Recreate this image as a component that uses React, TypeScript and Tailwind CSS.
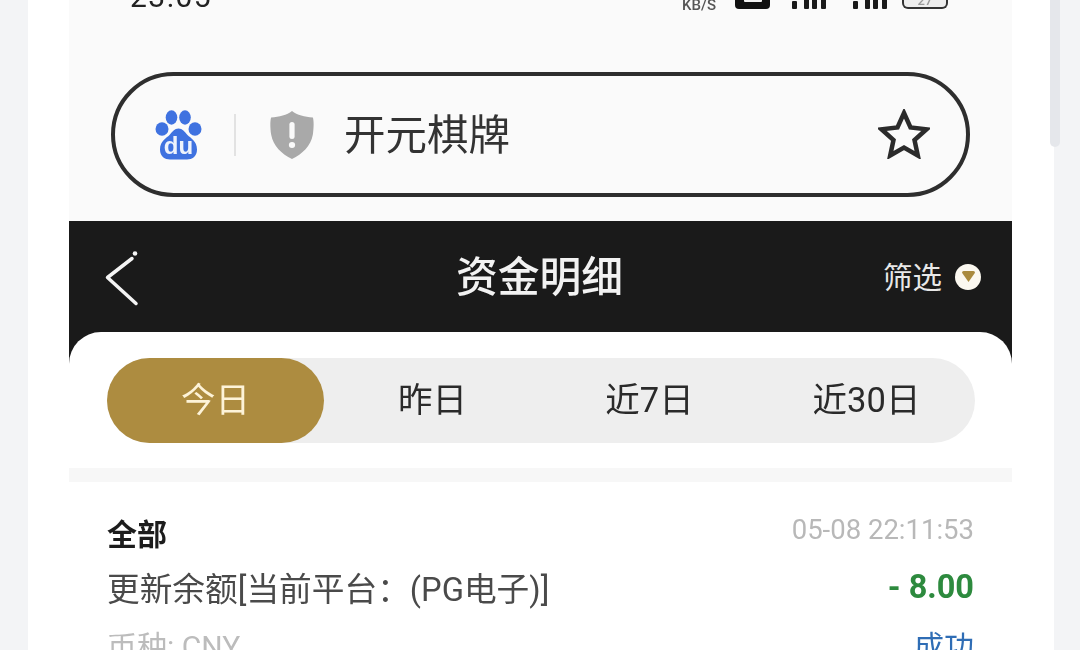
const cjk = "font-['Roboto','Noto_Sans_CJK_SC',sans-serif]";

function Paw() {
  return (
    <svg width="48" height="52" viewBox="0 0 48 52" className="shrink-0">
      <g fill="#3f72e0">
        <ellipse cx="17.500" cy="8.500" rx="5.800" ry="7.200" />
        <ellipse cx="31" cy="8.500" rx="5.800" ry="7.200" />
        <ellipse cx="8" cy="20" rx="6.500" ry="6.800" />
        <ellipse cx="41" cy="20" rx="6.500" ry="6.800" />
        <path d="M24.500 19.500c4 0 6 3 9 6.500 3 3 9.500 6 9.500 14.500 0 7-5 10-10 10H16c-5 0-10-3-10-10 0-8.500 6.500-11.500 9.500-14.500 3-3.500 5-6.500 9-6.500z" />
      </g>
      <text x="24.500" y="45" textAnchor="middle" fontFamily="Liberation Sans, sans-serif" fontWeight="700" fontSize="24" fill="#eef3fc">du</text>
    </svg>
  );
}

function Shield() {
  return (
    <svg width="48" height="50" viewBox="0 0 46 50" preserveAspectRatio="none" className="shrink-0">
      <path d="M23 1c5 4 12 6 20 6.500 1 3 1 10 0 17C41 36 33 44 23 49 13 44 5 36 3 24.500c-1-7-1-14 0-17C11 7 18 5 23 1z" fill="#a9a9a9" />
      <rect x="20.500" y="12" width="5" height="17" rx="2.500" fill="#fafafa" />
      <circle cx="23" cy="35" r="3" fill="#fafafa" />
    </svg>
  );
}

function Star() {
  return (
    <svg width="52" height="50" viewBox="0 0 52 50" className="shrink-0 mt-[-2px]">
      <path d="M26 4l6.500 14.500 16 1.800-12 10.700 3.300 15.500L26 38.500 12.200 46.500l3.300-15.500-12-10.700 16-1.800z" fill="none" stroke="#2b2b2b" strokeWidth="4.500" strokeLinejoin="miter" />
    </svg>
  );
}

function Signal() {
  return (
    <svg width="36" height="12" viewBox="0 0 36 12">
      <g fill="#1a1a1a">
        <rect x="1" y="4" width="5" height="8" rx="1" />
        <rect x="13" y="0" width="5" height="12" rx="1" />
        <rect x="21" y="0" width="5" height="12" rx="1" />
        <rect x="30" y="0" width="5" height="12" rx="1" />
      </g>
    </svg>
  );
}

function Tab({ label, active }: { label: string; active?: boolean }) {
  return (
    <div
      className={
        active
          ? "flex-1 h-full rounded-full bg-[#ad8c40] text-[#fdf3d8] flex items-center justify-center"
          : "flex-1 h-full rounded-full text-[#2a2a2a] flex items-center justify-center"
      }
    >
      {label}
    </div>
  );
}

export default function App() {
  return (
    <div className={`h-[650px] w-[1080px] overflow-hidden bg-[#f3f4f6] ${cjk} relative`}>
      <div className="ml-7 w-[1026px] h-full bg-white pl-[41px] pr-[42px]">
        <div className="w-[943px] h-full flex flex-col">
          {/* Top phone area */}
          <div className="h-[221px] shrink-0 bg-[#fafafa] flex flex-col">
            <div className="h-[8px] flex items-end pl-[61px] pr-[64px] justify-between blur-[0.4px]">
              <div className="text-[30px] leading-[30px] text-[#222] tracking-[1.500px] mb-[-4px]">23:05</div>
              <div className="flex items-end mb-[-1px]">
                <div className="text-[15px] leading-[15px] font-medium text-[#555] mb-[-4px]">KB/S</div>
                <div className="ml-[19px] w-[35px] h-[10px] bg-[#111] rounded-b-[4px] flex justify-center">
                  <div className="w-[18px] h-[3px] bg-[#f2f2f2] rounded-b-[1px]" />
                </div>
                <div className="ml-[21px]"><Signal /></div>
                <div className="ml-[25px]"><Signal /></div>
                <div className="ml-[14px] w-[46px] h-[9px] border-2 border-t-0 border-[#333] rounded-b-[6px] bg-[#eeeeee] flex justify-center items-end overflow-hidden">
                  <span className="text-[13px] leading-[13px] font-medium text-[#999]">27</span>
                </div>
              </div>
            </div>
            <div className="mt-[64px] ml-[42px] w-[859px] h-[125px] rounded-full border-4 border-[#2e2e2e] flex items-center pl-[39px] pr-[36px] blur-[0.4px]">
              <Paw />
              <div className="w-[2px] h-[42px] bg-[#e2e2e2] ml-[32px] mr-[32px]" />
              <Shield />
              <div className="ml-[28px] mt-[3px] text-[41.500px] leading-none text-[#333] flex-1">开元棋牌</div>
              <Star />
            </div>
          </div>

          {/* Black header */}
          <div className="h-[111px] shrink-0 bg-[#1a1a1a] flex items-center relative pl-[36px] pr-[31px] justify-between">
            <svg width="36" height="58" viewBox="0 0 36 58" className="shrink-0">
              <path d="M27 10.500 2.500 29.500 31 55.500" fill="none" stroke="#f4f4f4" strokeWidth="3.500" strokeLinecap="round" strokeLinejoin="round" />
              <circle cx="30" cy="5.500" r="2.300" fill="#f4f4f4" />
            </svg>
            <div className="flex items-center">
              <span className="text-[29.500px] text-[#e8e8e8] mr-[13px] mt-[4px]">筛选</span>
              <span className="w-[26px] h-[26px] rounded-full bg-[#fbf8f0] flex items-center justify-center">
                <svg width="13" height="11" viewBox="0 0 12 10"><path d="M0 1.500Q0 0 1.500 0h9Q12 0 12 1.500L6 10z" fill="#a98a3e" /></svg>
              </span>
            </div>
            <div className="absolute inset-x-0 top-0 h-full flex items-center justify-center pr-[2px] pointer-events-none">
              <span className="text-[41.800px] font-medium text-[#f2f2f2] mt-[4px] blur-[0.4px]">资金明细</span>
            </div>
          </div>

          {/* Card */}
          <div className="flex-1 bg-[#1a1a1a]">
            <div className="h-full bg-white rounded-t-[32px] flex flex-col">
              <div className="h-[136px] shrink-0 pt-[26px] pl-[38px]">
                <div className="h-[85px] rounded-full bg-[#eeeeee] flex items-center text-[34.500px] w-[868px] blur-[0.3px]">
                  <Tab label="今日" active />
                  <Tab label="昨日" />
                  <Tab label="近7日" />
                  <Tab label="近30日" />
                </div>
              </div>
              <div className="h-[14px] shrink-0 bg-[#f7f7f7]" />
              <div className="pt-[32px] pl-[38px] pr-[38px] blur-[0.4px]">
                <div className="flex justify-between items-center h-[36px]">
                  <span className="text-[30px] font-bold text-[#1c1c1c] leading-none mt-[6px]">全部</span>
                  <span className="text-[27.500px] text-[#b8b8b8] leading-none mt-[-4px]">05-08 22:11:53</span>
                </div>
                <div className="flex justify-between items-center h-[44px] mt-[18px]">
                  <span className="text-[32.700px] text-[#4a4a4a] leading-none">更新余额[当前平台：(PG电子)]</span>
                  <span className="text-[32.500px] font-bold text-[#2d8a3e] leading-none mt-[-5px]">- 8.00</span>
                </div>
                <div className="flex justify-between items-center h-[40px] mt-[15px]">
                  <span className="text-[30px] text-[#bcbcbc] leading-none">币种: CNY</span>
                  <span className="text-[30px] text-[#2f6db5] leading-none">成功</span>
                </div>
              </div>
            </div>
          </div>
        </div>
      </div>
      <div className="absolute top-0 left-[1050px] w-[10px] h-[147px] bg-[#e5e7eb] rounded-b-full" />
    </div>
  );
}
